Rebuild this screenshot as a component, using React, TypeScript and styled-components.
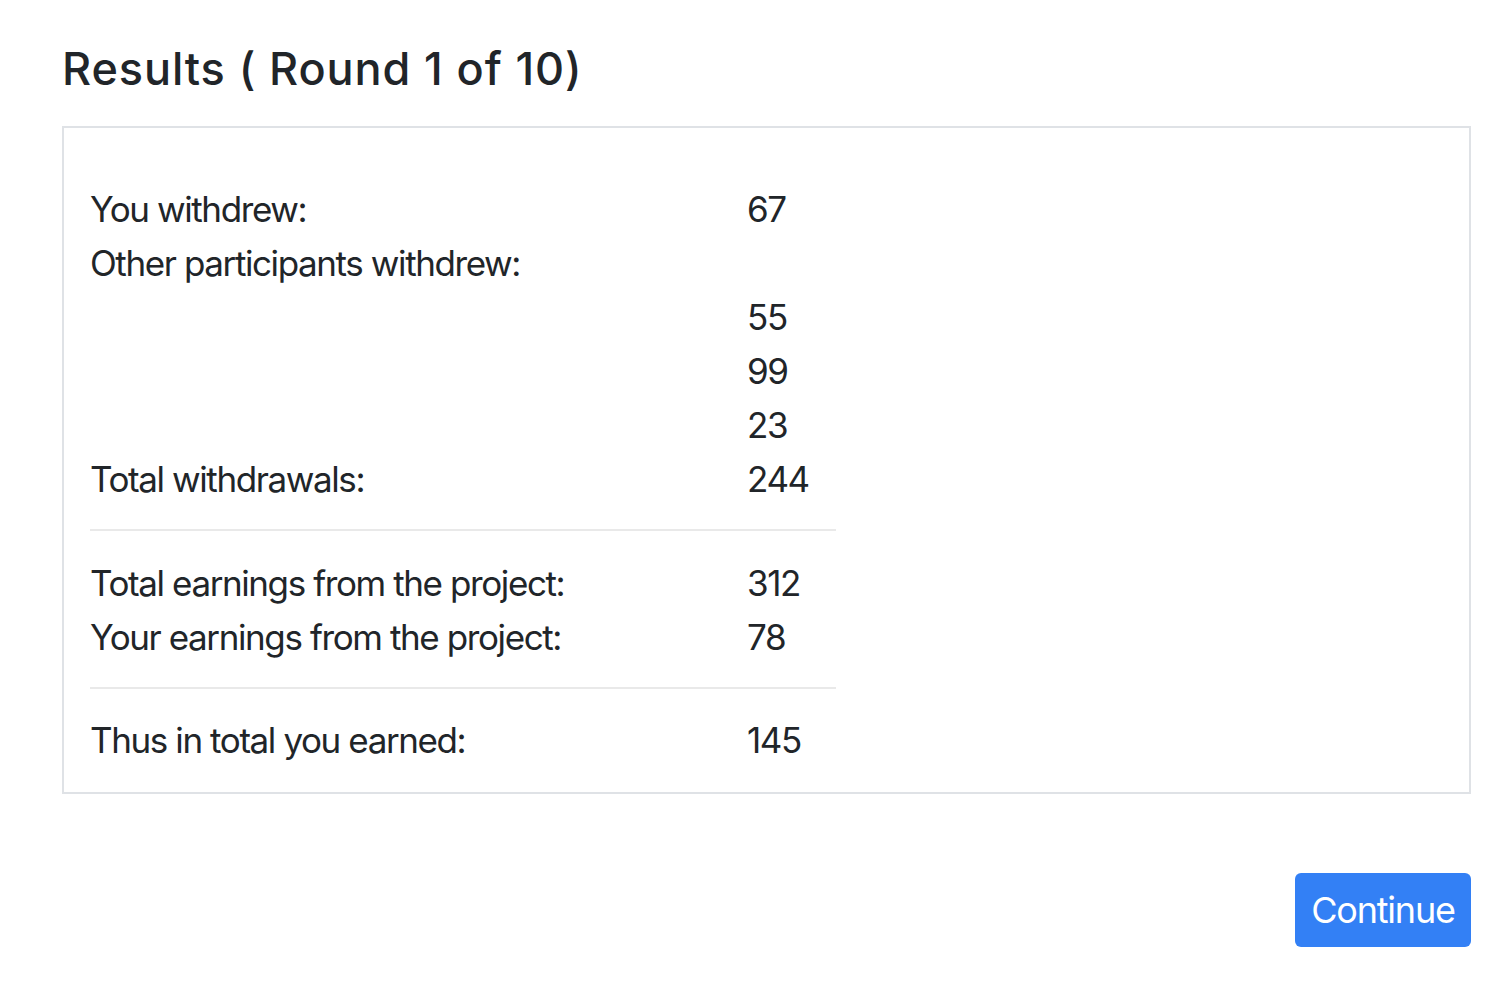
import React from "react";
import styled, { createGlobalStyle } from "styled-components";

const Global = createGlobalStyle`
  html, body { margin: 0; padding: 0; background: #fff; }
  body {
    font-family: Inter, "Noto Sans", "Liberation Sans", sans-serif;
    color: #212529;
  }
`;

const Page = styled.div`
  padding: 38px 35px 0 62px;
  display: flex;
  flex-direction: column;
`;

const Title = styled.h2`
  margin: 0 0 26px 0;
  font-size: 45px;
  line-height: 62px;
  font-weight: 500;
  letter-spacing: 0.9px;
`;

const Card = styled.div`
  border: 2px solid #dfe2e6;
  padding: 54px 26px 25px 26px;
`;

const Table = styled.div`
  width: 746px;
  display: flex;
  flex-direction: column;
`;

const Row = styled.div`
  display: grid;
  grid-template-columns: 657px auto;
  font-size: 35px;
  line-height: 54px;
  letter-spacing: -1.4px;
`;

const Cell = styled.span``;

const Divider = styled.hr<{ $after?: number }>`
  margin: 23px 0 ${(p) => p.$after ?? 24}px 0;
  border: 0;
  border-top: 2px solid #e9e9e9;
  height: 0;
`;

const Footer = styled.div`
  display: flex;
  justify-content: flex-end;
  margin-top: 79px;
`;

const Button = styled.button`
  background: #3380f5;
  color: #fff;
  border: 0;
  border-radius: 6px;
  width: 176px;
  height: 74px;
  font-family: inherit;
  font-size: 36px;
  letter-spacing: -1.2px;
  padding: 0;
  cursor: pointer;
`;

type R = [string, string];

const group1: R[] = [
  ["You withdrew:", "67"],
  ["Other participants withdrew:", ""],
  ["", "55"],
  ["", "99"],
  ["", "23"],
  ["Total withdrawals:", "244"],
];
const group2: R[] = [
  ["Total earnings from the project:", "312"],
  ["Your earnings from the project:", "78"],
];
const group3: R[] = [["Thus in total you earned:", "145"]];

const Rows = ({ rows }: { rows: R[] }) => (
  <>
    {rows.map(([a, b], i) => (
      <Row key={i}>
        <Cell>{a}</Cell>
        <Cell>{b}</Cell>
      </Row>
    ))}
  </>
);

export default function App() {
  return (
    <>
      <Global />
      <Page>
        <Title>Results ( Round 1 of 10)</Title>
        <Card>
          <Table>
            <Rows rows={group1} />
            <Divider $after={25} />
            <Rows rows={group2} />
            <Divider />
            <Rows rows={group3} />
          </Table>
        </Card>
        <Footer>
          <Button>Continue</Button>
        </Footer>
      </Page>
    </>
  );
}
